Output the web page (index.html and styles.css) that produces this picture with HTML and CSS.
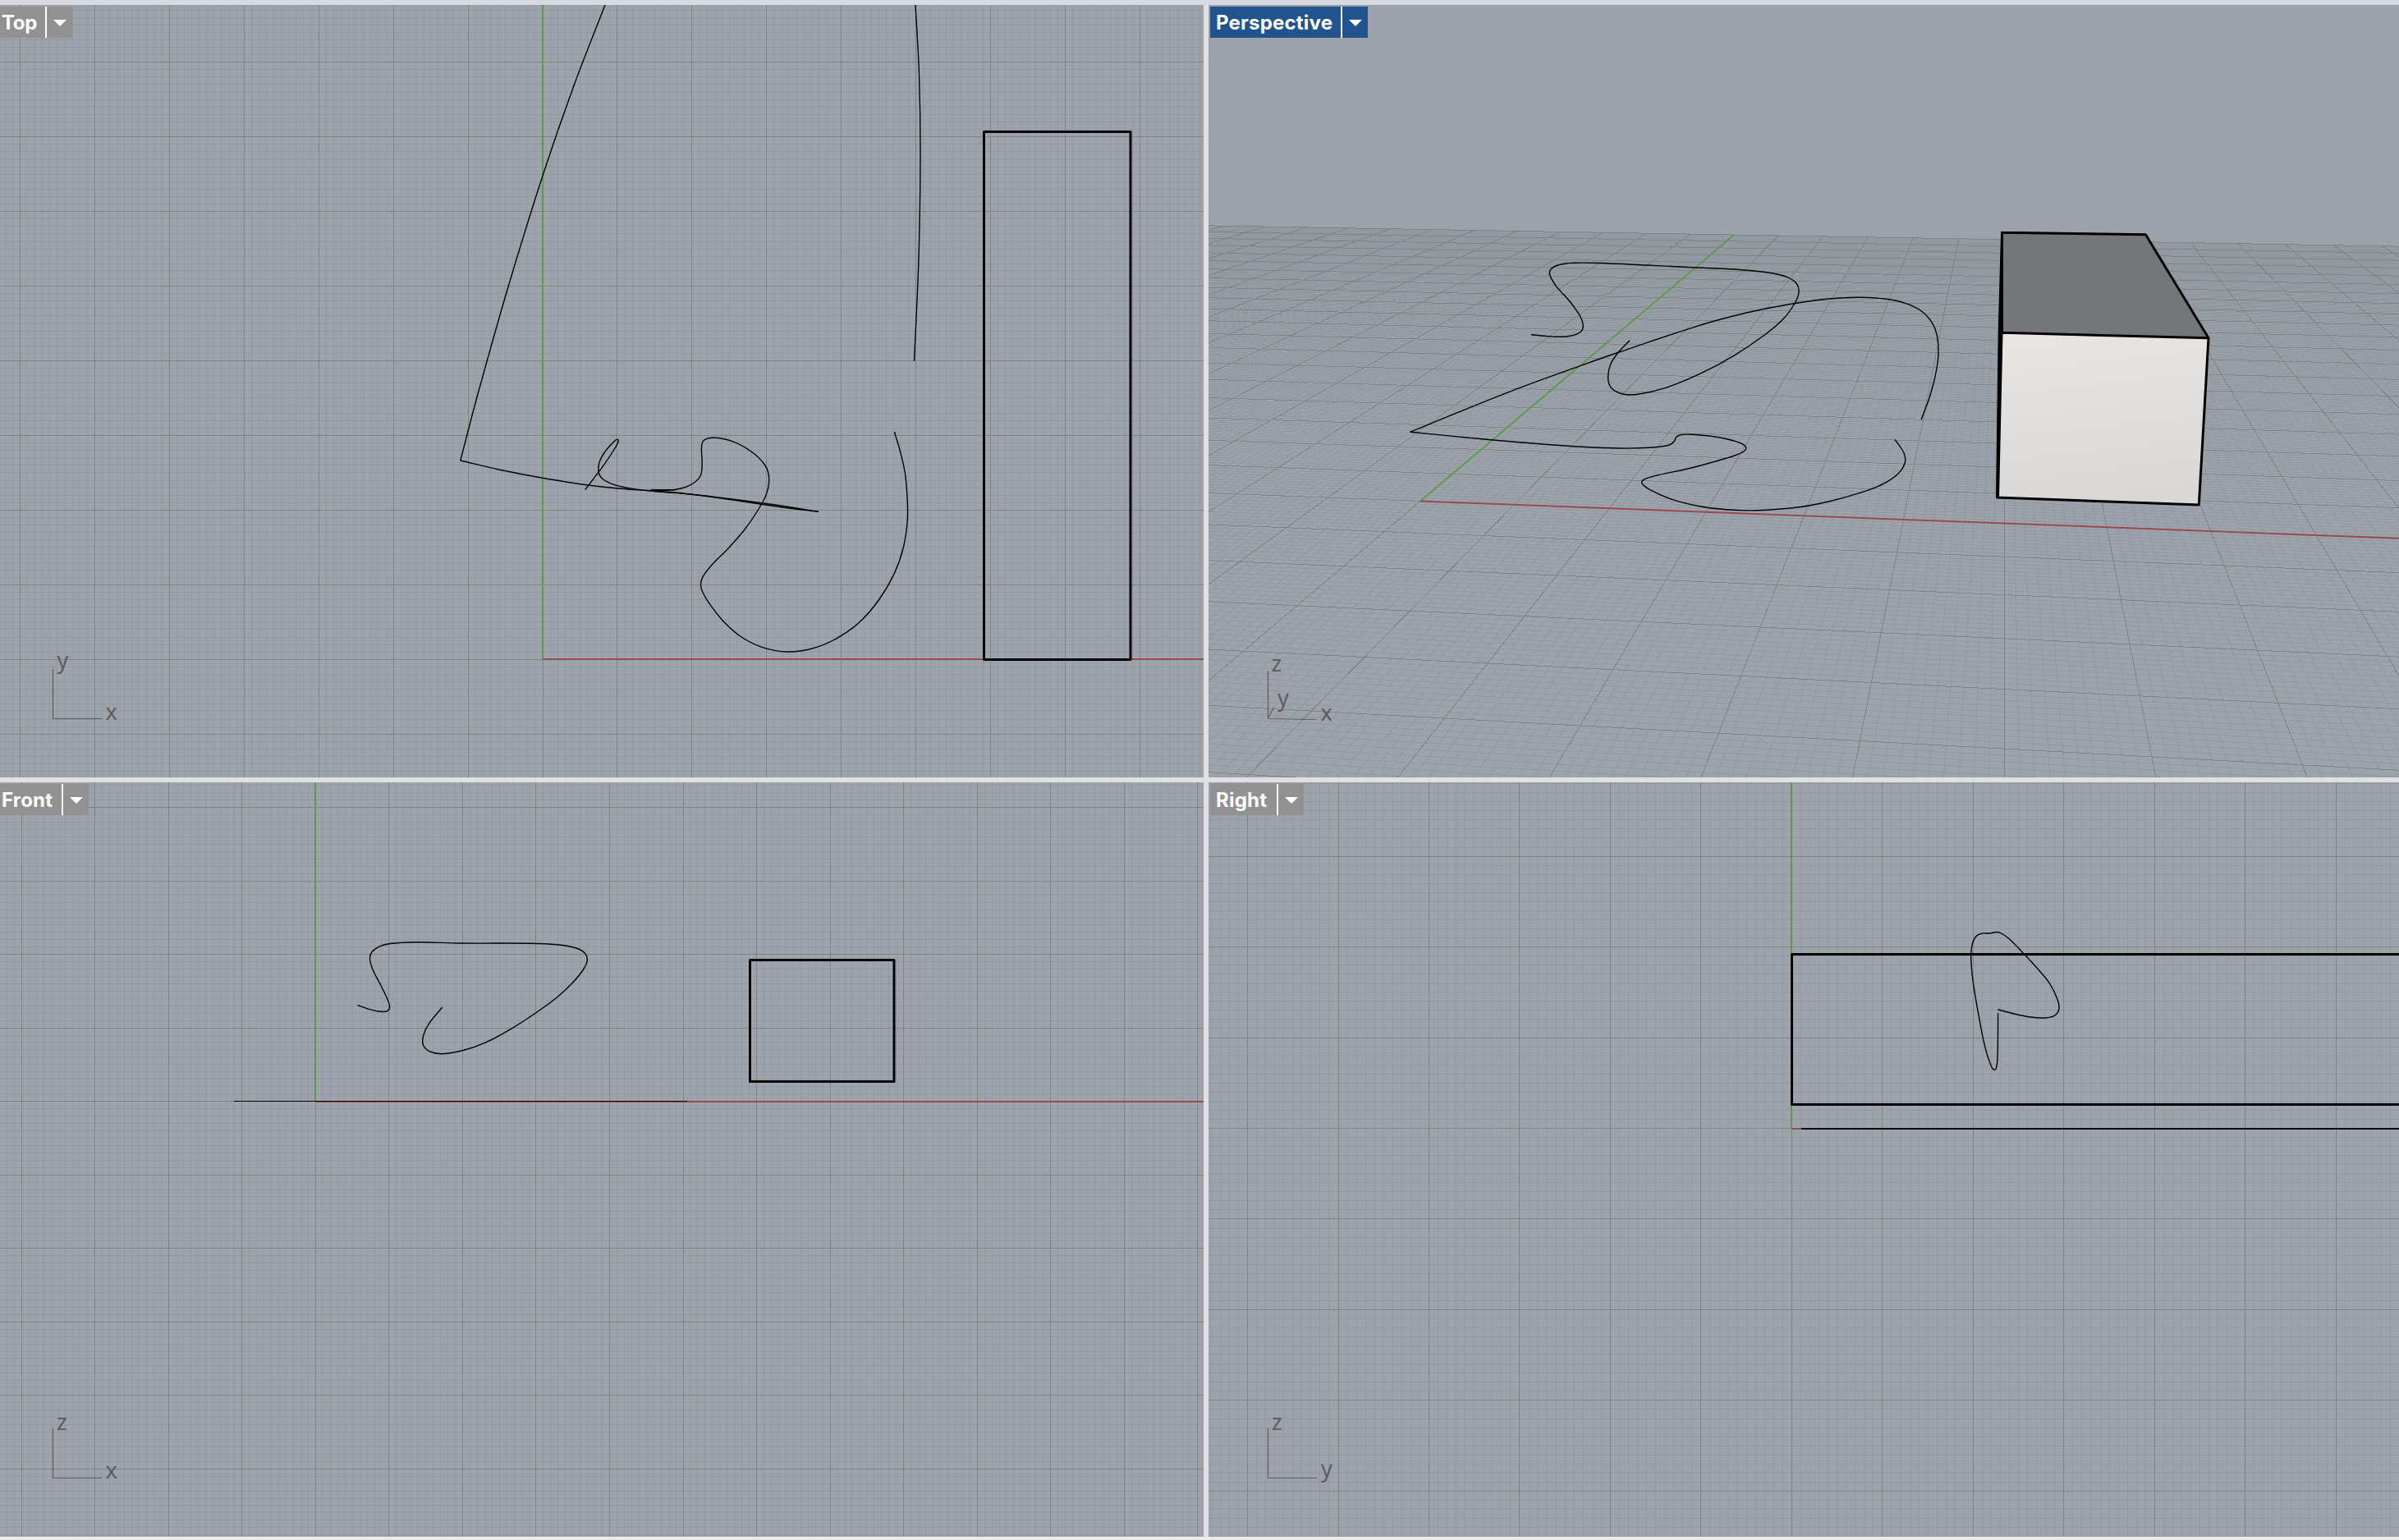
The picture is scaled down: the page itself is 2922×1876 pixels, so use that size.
FILE: index.html
```html
<!DOCTYPE html>
<html lang="en">
<head>
<meta charset="utf-8">
<title>Viewports</title>
<link rel="stylesheet" href="styles.css">
</head>
<body>
<main class="viewports">
  <section class="viewport">
    <svg class="scene" viewBox="0 6 1466 941">
      <g class="grid" data-view="top"></g>
      <path class="axis-green" d="M661 6V803"/>
      <path class="axis-red" d="M661 803H1466"/>
      <path class="box-edge" d="M1198.5 160.5H1377V803.5H1198.5Z"/>
      <g class="curves" data-view="top"></g>
      <path class="gizmo" d="M64.5 815V875.5H124"/>
      <text class="gizmo-text" x="69.5" y="813.5">y</text>
      <text class="gizmo-text" x="128.5" y="876.5">x</text>
    </svg>
    <header class="title title-edge"><span class="name name-top">Top</span><span class="menu"><i class="arrow"></i></span></header>
  </section>
  <section class="viewport">
    <svg class="scene" viewBox="1472 6 1450 941">
      <defs>
        <linearGradient id="front-face" x1="0" y1="0" x2="0.15" y2="1">
          <stop offset="0" stop-color="#e7e6e4"/><stop offset="1" stop-color="#d9d8d6"/>
        </linearGradient>
      </defs>
      <g class="grid" data-view="perspective"></g>
      <path class="axis-green" d="M1730 610.5L2112 286"/>
      <path class="axis-red" d="M1730 610.5L2922 655.8"/>
      <path class="face-top" d="M2438.8 283.3L2613.4 285.8L2690 411.7L2438 405.3Z"/>
      <path class="face-side" d="M2438.5 283.3L2435 405L2432.3 606L2438 405Z"/>
      <path class="face-front" d="M2438 405.3L2690 411.7L2678.3 615L2432.5 606Z"/>
      <path class="box-edge" d="M2438.5 283.3L2613.4 285.8L2690 411.7L2678.3 615L2432.5 606L2435.2 405L2438.5 283.3V405.3L2690 411.7M2438 405.3L2433.5 606"/>
      <g class="curves" data-view="perspective"></g>
      <path class="gizmo" d="M1544.5 817V875L1551.7 861.7M1544.5 875.5L1603 876.5"/>
      <text class="gizmo-text" x="1548.5" y="817.5">z</text>
      <text class="gizmo-text" x="1556" y="859.5">y</text>
      <text class="gizmo-text" x="1608.5" y="878">x</text>
    </svg>
    <header class="title title-active"><span class="name name-perspective">Perspective</span><span class="menu"><i class="arrow"></i></span></header>
  </section>
  <section class="viewport">
    <svg class="scene" viewBox="0 953 1466 919">
      <g class="grid" data-view="front"></g>
      <path class="axis-green" d="M384 953V1342"/>
      <path class="axis-red" d="M384 1342H1466"/>
      <path class="box-edge" d="M913.5 1169.5H1089V1317.5H913.5Z"/>
      <path class="flat-curve" d="M285 1341.5H837"/>
      <g class="curves" data-view="front"></g>
      <path class="gizmo" d="M64.5 1740V1800.5H124"/>
      <text class="gizmo-text" x="69" y="1741.5">z</text>
      <text class="gizmo-text" x="128.5" y="1801">x</text>
    </svg>
    <header class="title title-edge"><span class="name name-front">Front</span><span class="menu"><i class="arrow"></i></span></header>
  </section>
  <section class="viewport">
    <svg class="scene" viewBox="1472 953 1450 919">
      <g class="grid" data-view="right"></g>
      <path class="axis-green" d="M2182 953V1375"/>
      <path class="axis-red" d="M2182 1375H2922"/>
      <path class="box-edge" d="M2922 1162.5H2182.5V1345.5H2922"/>
      <path class="flat-curve flat-curve-wide" d="M2194 1375H2922"/>
      <g class="curves" data-view="right"></g>
      <path class="gizmo" d="M1544.5 1740V1800.5H1604.5"/>
      <text class="gizmo-text" x="1549" y="1741.5">z</text>
      <text class="gizmo-text" x="1609" y="1798.5">y</text>
    </svg>
    <header class="title"><span class="name name-right">Right</span><span class="menu"><i class="arrow"></i></span></header>
  </section>
</main>
<script src="scene.js"></script>
</body>
</html>
```
FILE: styles.css
```css
body {
  margin: 0;
  background: #e0e0e3;
}

.viewports {
  box-sizing: border-box;
  width: 2922px;
  height: 1876px;
  display: grid;
  grid-template-columns: 1466px 1450px;
  grid-template-rows: 941px 919px;
  gap: 6px;
  border-top: 6px solid #d8dadf;
  border-bottom: 4px solid #ebebeb;
  overflow: hidden;
}

.viewport {
  position: relative;
  background: #9ea3ab;
  overflow: hidden;
}

.scene {
  display: block;
  width: 100%;
  height: 100%;
}

/* Title tab floats over the scene */
.title {
  position: absolute;
  top: 2px;
  left: 2px;
  height: 38px;
  display: flex;
  background: #919191;
  color: #fff;
  font: 700 24px/39px Inter, "Liberation Sans", sans-serif;
  letter-spacing: 0.2px;
}

.title-edge {
  left: 0;
}

.title-active {
  background: #21538f;
}

.name {
  box-sizing: border-box;
  padding-left: 7px;
}

.title-edge .name {
  padding-left: 2px;
}

.name-top {
  width: 55px;
  letter-spacing: -0.35px;
}

.name-perspective {
  width: 159px;
}

.name-front {
  width: 75px;
}

.name-right {
  width: 81px;
}

.menu {
  width: 31px;
  display: flex;
  align-items: center;
  justify-content: center;
  border-left: 2px solid #fff;
}

.arrow {
  border: solid transparent;
  border-width: 8px 8px 0;
  border-top-color: #fff;
  margin-top: 2px;
}

.grid-minor,
.grid-major {
  fill: none;
  stroke-width: 1;
  shape-rendering: crispEdges;
}

.grid-minor {
  stroke: #9399a0;
}

.grid-major {
  stroke: #7f8483;
}

.axis-green,
.axis-red {
  fill: none;
  stroke: #5b9a50;
  stroke-width: 2;
}

.axis-red {
  stroke: #954c50;
}

.curve,
.flat-curve {
  fill: none;
  stroke: #000;
  stroke-width: 1.4;
}

.flat-curve {
  stroke-width: 1;
}

.flat-curve-wide {
  stroke-width: 2;
}

.box-edge {
  fill: none;
  stroke: #000;
  stroke-width: 3;
  stroke-linejoin: round;
}

.face-top {
  fill: #757679;
}

.face-side {
  fill: #222;
}

.face-front {
  fill: url(#front-face);
}

.gizmo {
  fill: none;
  stroke: #5c5c5c;
  stroke-width: 1.2;
}

.gizmo-text {
  font: 27px "Noto Sans", sans-serif;
  fill: #5c5c5c;
}
```
FILE: scene.js
```js
const NS = 'http://www.w3.org/2000/svg';

function addPath(parent, className, d) {
  const path = document.createElementNS(NS, 'path');
  path.setAttribute('class', className);
  path.setAttribute('d', d);
  parent.appendChild(path);
}

function gridGroup(view) {
  return document.querySelector('.grid[data-view="' + view + '"]');
}

// Orthographic grid: ten minor cells per major cell, snapped to whole pixels
function flatGrid(view, ox, oy, pitch, x0, y0, x1, y1) {
  let minor = '';
  let major = '';
  for (let k = -300; k <= 300; k++) {
    const x = Math.floor(ox + k * pitch / 10) + 0.5;
    const y = Math.floor(oy + k * pitch / 10) + 0.5;
    let d = '';
    if (x > x0 && x < x1) d += 'M' + x + ' ' + y0 + 'V' + y1;
    if (y > y0 && y < y1) d += 'M' + x0 + ' ' + y + 'H' + x1;
    if (k % 10 === 0) major += d; else minor += d;
  }
  addPath(gridGroup(view), 'grid-minor', minor);
  addPath(gridGroup(view), 'grid-major', major);
}

// Ground plane seen through the camera
function project(i, j) {
  const w = 1 - 0.00708 * i + 0.0581 * j;
  const x = (101.27 * i + 141.85 * j + 1730) / w;
  const y = (0.4 * j + 610.4) / w;
  return x.toFixed(2) + ' ' + y.toFixed(2);
}

function groundGrid() {
  let minor = '';
  let major = '';
  for (let k = -200; k <= 200; k++) {
    const d = 'M' + project(k / 10, -8) + 'L' + project(k / 10, 20);
    if (k % 10 === 0) major += d; else minor += d;
  }
  for (let k = -80; k <= 200; k++) {
    const d = 'M' + project(-20, k / 10) + 'L' + project(20, k / 10);
    if (k % 10 === 0) major += d; else minor += d;
  }
  addPath(gridGroup('perspective'), 'grid-minor', minor);
  addPath(gridGroup('perspective'), 'grid-major', major);
}

// Smooth curve through a list of x,y points
function curve(view, text) {
  const p = text.trim().split(/\s+/).map(s => s.split(',').map(Number));
  let d = 'M' + p[0];
  for (let n = 0; n < p.length - 1; n++) {
    const a = p[Math.max(n - 1, 0)];
    const b = p[n];
    const c = p[n + 1];
    const e = p[Math.min(n + 2, p.length - 1)];
    const len = Math.hypot(c[0] - b[0], c[1] - b[1]);
    const t1 = Math.hypot(c[0] - a[0], c[1] - a[1]) || 1;
    const t2 = Math.hypot(e[0] - b[0], e[1] - b[1]) || 1;
    const k = len / 3;
    d += 'C' + (b[0] + (c[0] - a[0]) / t1 * k) + ' ' + (b[1] + (c[1] - a[1]) / t1 * k) +
      ' ' + (c[0] - (e[0] - b[0]) / t2 * k) + ' ' + (c[1] - (e[1] - b[1]) / t2 * k) +
      ' ' + c[0] + ' ' + c[1];
  }
  addPath(document.querySelector('.curves[data-view="' + view + '"]'), 'curve', d);
}

flatGrid('top', 661, 803.3, 90.95, 0, 6, 1466, 947);
flatGrid('front', 384.4, 1341.6, 89.53, 0, 953, 1466, 1872);
flatGrid('right', 2182.4, 1374.5, 110.48, 1472, 953, 2922, 1872);
groundGrid();

curve('top', '737,6 698,107 661,214 620,346 582,480 560.8,561');
curve('top', '1115,6 1119.5,90 1121,190 1119,315 1113.5,440');
curve('top', `560.8,561 610,572.5 660.8,582.3 716,591 773,596.6 800,597.6 822,596.5 836,593 846.5,587.3 853,580
  855,570 855,558.3 854.5,545 857.1,536.5 869,533.2 891.4,537.3 916,550.7 932.2,567.3 936.7,583.3 933.5,601.7
  924,620 907.8,644 887.3,667.7 867,688.3 856,702.7 853.5,712.7 856,721.7 865,736.7 881,756.7 901.6,775
  928,788.3 958.8,794 989.4,790 1018,778.3 1046.5,758.3 1071,730 1089.4,698.3 1100.4,666.7 1105.3,633.3
  1105,606.7 1102.4,576.7 1096.3,549.3 1089.4,526`);
curve('top', `712.6,596.7 724,581.7 736.3,565.3 746.5,550 752.6,539.3 752.2,535.3 747,538.7 736.3,551 730,563.3
  729,574.3 732.2,581.7 742.4,588.3 760.8,593.7 789.4,597.7 822,600 858.8,604 903.7,609.5 952.6,616.2 996.7,623.3`);
curve('top', '996.7,623.3 960.8,619 919,613 879,607 842.4,602.3 801.6,598.7 793.5,597.3 800,596.8 822,596.8');

curve('perspective', `1865,407.7 1881.3,409.3 1897.6,410.3 1914,409 1925.5,404 1928.3,396.7 1924.6,385 1911.6,366.7
  1895.3,348.3 1887.8,335 1888.8,328.3 1897.6,323 1916.2,320.3 1948.8,320.5 2004.7,323 2060.6,325.7 2111.8,328
  2153.7,332 2177,337.7 2188.6,346 2191,356 2186.3,369 2172.3,388.3 2149,408.3 2111.8,433.3 2069.9,455.7
  2028,472.7 1995.4,480.3 1976.8,480 1962.8,472.7 1958.6,460 1961.9,443.3 1972,428.3 1985,414.7`);
curve('perspective', `2339.9,511.3 2348.7,488.3 2356.7,460 2360.9,433.3 2359.5,410 2353.4,393.3 2339.4,378.3
  2320.7,369.3 2297.4,364.3 2264.7,362.3 2227.3,364 2190,369 2149,376.3 2107,386 2060.6,399.3 1972,429
  1925.5,445.3 1855.7,470.7 1785.9,498.3 1717.5,526.3`);
curve('perspective', `1717.5,526.3 1818.5,536 1916.2,543.7 1972,546 2009.3,545.3 2032.6,542.3 2039.6,537.3
  2041.5,532.7 2046.6,529.7 2060.6,529.3 2088.5,532 2114,537.7 2126.7,545.3 2118.8,552.7 2093,561 2055.9,571
  2018.7,579 2001.9,584.3 2000,589 2011.7,597.7 2037.3,608.7 2069.9,616.7 2102.5,620.8 2139.7,621.7 2190,618
  2227.3,611 2264.7,600.7 2292.7,590 2312.3,576.7 2320.3,563.3 2318.9,551.7 2308,535.3`);

curve('front', `435.4,1224.3 449.6,1229.3 463.7,1232.3 472.2,1231.3 474.6,1226 471.7,1216.7 463.7,1200 454.3,1181.7
  450.5,1167.7 453.3,1159.3 463.7,1152.3 480.2,1149 510.9,1147.7 560.5,1149 645.4,1149.2 678.4,1150.7 702,1155
  712.9,1161.7 715.2,1170 710.5,1181 697.3,1197.3 678.4,1215 652.5,1234 624.2,1252.3 593.5,1269 565.2,1279.3
  539.2,1283.7 523.6,1281 515.6,1273.3 515.6,1261.7 522.7,1246.7 538.7,1227`);

curve('right', `2433.3,1229.7 2453.3,1235 2473.3,1239 2490,1240 2501.7,1237.7 2507.7,1230 2506.3,1218.3 2496.7,1198.3
  2483.3,1181.7 2463.3,1160 2446.7,1143.3 2436.7,1136.5 2431.7,1135.5 2423.3,1137 2413.3,1137.2 2406.7,1140.7
  2402.3,1150 2400.7,1166.7 2403.3,1196.7 2410,1236.7 2417.3,1273.3 2424.3,1296 2429.3,1303.3 2432.3,1296.7
  2433.3,1276.7 2433.6,1234`);
```
